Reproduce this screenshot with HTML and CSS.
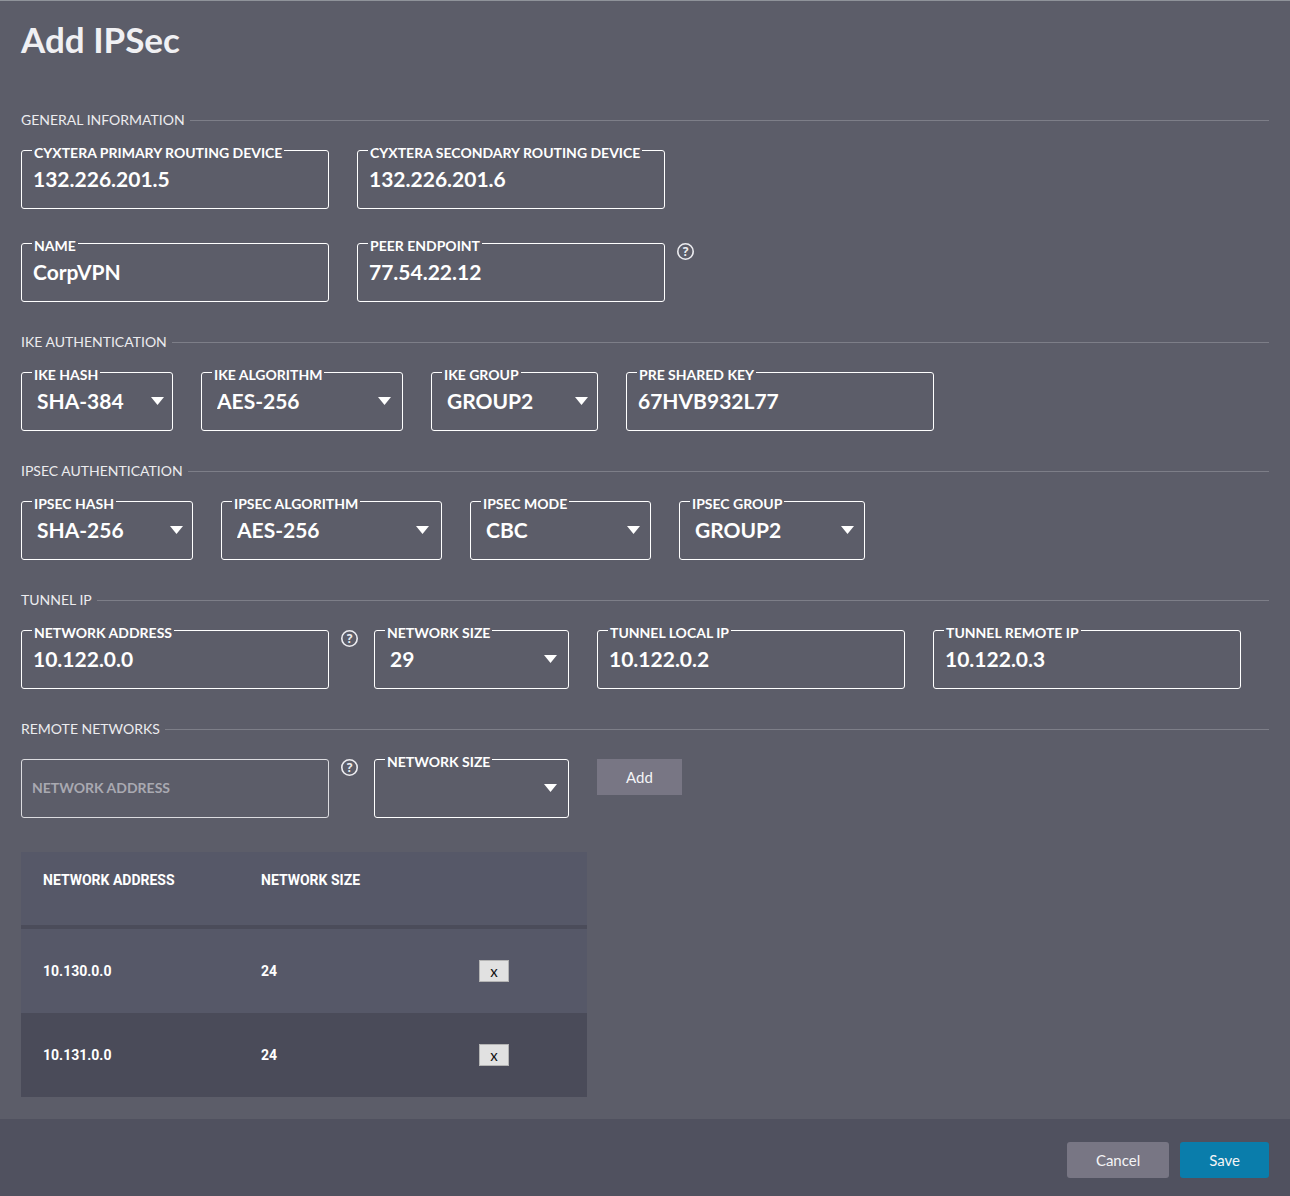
FILE: index.html
```html
<!DOCTYPE html>
<html lang="en">
<head>
<meta charset="utf-8">
<meta name="viewport" content="width=device-width, initial-scale=1">
<title>Add IPSec</title>
<link rel="stylesheet" href="styles.css">
</head>
<body>
<form class="page">
  <main class="content">
    <h1 class="page-title">Add IPSec</h1>

    <section class="section">
      <h2 class="section-title">GENERAL INFORMATION</h2>
      <div class="row">
        <div class="field field-text">
          <input class="control" id="primary" type="text" value="132.226.201.5">
          <label class="label" for="primary">CYXTERA PRIMARY ROUTING DEVICE</label>
        </div>
        <div class="field field-text">
          <input class="control" id="secondary" type="text" value="132.226.201.6">
          <label class="label" for="secondary">CYXTERA SECONDARY ROUTING DEVICE</label>
        </div>
      </div>
      <div class="row">
        <div class="field field-text">
          <input class="control" id="name" type="text" value="CorpVPN">
          <label class="label" for="name">NAME</label>
        </div>
        <div class="with-help">
          <div class="field field-text">
            <input class="control" id="peer" type="text" value="77.54.22.12">
            <label class="label" for="peer">PEER ENDPOINT</label>
          </div>
          <button class="help" type="button"><svg class="help-icon" viewBox="0 0 17 17"><circle cx="8.5" cy="8.5" r="7.7"/><text x="8.5" y="13">?</text></svg></button>
        </div>
      </div>
    </section>

    <section class="section">
      <h2 class="section-title">IKE AUTHENTICATION</h2>
      <div class="row">
        <div class="field field-ike-hash">
          <select class="control select" id="ike-hash"><option>SHA-384</option></select>
          <svg class="arrow" viewBox="0 0 13 8"><path d="M0 0h13L6.5 8z"/></svg>
          <label class="label" for="ike-hash">IKE HASH</label>
        </div>
        <div class="field field-ike-algorithm">
          <select class="control select" id="ike-algorithm"><option>AES-256</option></select>
          <svg class="arrow" viewBox="0 0 13 8"><path d="M0 0h13L6.5 8z"/></svg>
          <label class="label" for="ike-algorithm">IKE ALGORITHM</label>
        </div>
        <div class="field field-ike-group">
          <select class="control select" id="ike-group"><option>GROUP2</option></select>
          <svg class="arrow" viewBox="0 0 13 8"><path d="M0 0h13L6.5 8z"/></svg>
          <label class="label" for="ike-group">IKE GROUP</label>
        </div>
        <div class="field field-text">
          <input class="control" id="psk" type="text" value="67HVB932L77">
          <label class="label" for="psk">PRE SHARED KEY</label>
        </div>
      </div>
    </section>

    <section class="section">
      <h2 class="section-title">IPSEC AUTHENTICATION</h2>
      <div class="row">
        <div class="field field-ipsec-hash">
          <select class="control select" id="ipsec-hash"><option>SHA-256</option></select>
          <svg class="arrow" viewBox="0 0 13 8"><path d="M0 0h13L6.5 8z"/></svg>
          <label class="label" for="ipsec-hash">IPSEC HASH</label>
        </div>
        <div class="field field-ipsec-algorithm">
          <select class="control select" id="ipsec-algorithm"><option>AES-256</option></select>
          <svg class="arrow" viewBox="0 0 13 8"><path d="M0 0h13L6.5 8z"/></svg>
          <label class="label" for="ipsec-algorithm">IPSEC ALGORITHM</label>
        </div>
        <div class="field field-ipsec-mode">
          <select class="control select" id="ipsec-mode"><option>CBC</option></select>
          <svg class="arrow" viewBox="0 0 13 8"><path d="M0 0h13L6.5 8z"/></svg>
          <label class="label" for="ipsec-mode">IPSEC MODE</label>
        </div>
        <div class="field field-ipsec-group">
          <select class="control select" id="ipsec-group"><option>GROUP2</option></select>
          <svg class="arrow" viewBox="0 0 13 8"><path d="M0 0h13L6.5 8z"/></svg>
          <label class="label" for="ipsec-group">IPSEC GROUP</label>
        </div>
      </div>
    </section>

    <section class="section">
      <h2 class="section-title">TUNNEL IP</h2>
      <div class="row">
        <div class="address-pair">
          <div class="with-help">
            <div class="field field-text">
              <input class="control" id="tunnel-address" type="text" value="10.122.0.0">
              <label class="label" for="tunnel-address">NETWORK ADDRESS</label>
            </div>
            <button class="help" type="button"><svg class="help-icon" viewBox="0 0 17 17"><circle cx="8.5" cy="8.5" r="7.7"/><text x="8.5" y="13">?</text></svg></button>
          </div>
          <div class="field field-size">
            <select class="control select" id="tunnel-size"><option>29</option></select>
            <svg class="arrow" viewBox="0 0 13 8"><path d="M0 0h13L6.5 8z"/></svg>
            <label class="label" for="tunnel-size">NETWORK SIZE</label>
          </div>
        </div>
        <div class="field field-text">
          <input class="control" id="local-ip" type="text" value="10.122.0.2">
          <label class="label" for="local-ip">TUNNEL LOCAL IP</label>
        </div>
        <div class="field field-text">
          <input class="control" id="remote-ip" type="text" value="10.122.0.3">
          <label class="label" for="remote-ip">TUNNEL REMOTE IP</label>
        </div>
      </div>
    </section>

    <section class="section">
      <h2 class="section-title">REMOTE NETWORKS</h2>
      <div class="row">
        <div class="address-pair">
          <div class="with-help">
            <div class="field field-text">
              <input class="control control-empty" type="text" aria-label="Network address" placeholder="NETWORK ADDRESS">
            </div>
            <button class="help" type="button"><svg class="help-icon" viewBox="0 0 17 17"><circle cx="8.5" cy="8.5" r="7.7"/><text x="8.5" y="13">?</text></svg></button>
          </div>
          <div class="field field-size">
            <select class="control select" id="remote-size"><option></option></select>
            <svg class="arrow" viewBox="0 0 13 8"><path d="M0 0h13L6.5 8z"/></svg>
            <label class="label" for="remote-size">NETWORK SIZE</label>
          </div>
        </div>
        <button class="button button-add" type="button">Add</button>
      </div>

      <table class="networks">
        <thead>
          <tr><th>NETWORK ADDRESS</th><th>NETWORK SIZE</th><th></th></tr>
        </thead>
        <tbody>
          <tr><td>10.130.0.0</td><td>24</td><td><button class="remove" type="button">x</button></td></tr>
          <tr><td>10.131.0.0</td><td>24</td><td><button class="remove" type="button">x</button></td></tr>
        </tbody>
      </table>
    </section>
  </main>

  <footer class="footer">
    <button class="button" type="button">Cancel</button>
    <button class="button button-save" type="submit">Save</button>
  </footer>
</form>
</body>
</html>
```

FILE: styles.css
```css
:root {
  --bg: #5c5d69;
  --line: #7d7e88;
}

* {
  box-sizing: border-box;
}

body {
  margin: 0;
  background: var(--bg);
  color: #fff;
  font-family: Lato, "Liberation Sans", sans-serif;
}

.page {
  display: flex;
  flex-direction: column;
  min-height: 100vh;
  border-top: 1px solid #8f939a;
}

.content {
  flex: 1;
  padding: 18px 21px 22px;
}

.page-title {
  margin: 0 0 51px;
  font-size: 35px;
  line-height: 40px;
  color: #f0f0f3;
}

.section {
  margin-bottom: 30px;
}

.section:last-child {
  margin-bottom: 0;
}

.section-title {
  display: flex;
  align-items: center;
  gap: 5px;
  margin: 0 0 20px;
  font-size: 14px;
  font-weight: 400;
  line-height: 20px;
  color: #ececef;
}

.section-title::after {
  content: "";
  flex: 1;
  height: 1px;
  background: var(--line);
}

.row {
  display: flex;
  align-items: flex-start;
  gap: 28px;
}

.row + .row,
.row + .networks {
  margin-top: 34px;
}

.with-help {
  display: flex;
  flex: 0 1 337px;
  align-items: flex-start;
  gap: 12px;
  min-width: 0;
}

.address-pair {
  display: flex;
  flex: 0 1 548px;
  gap: 16px;
  min-width: 0;
}

/* The control, its notched label and its arrow share one grid cell. */
.field {
  display: grid;
  min-width: 0;
}

.field > * {
  grid-area: 1 / 1;
}

.field-text { flex: 0 1 308px; }
.field-size { flex: 0 1 195px; }
.field-ike-hash { flex: 0 1 152px; }
.field-ike-algorithm { flex: 0 1 202px; }
.field-ike-group { flex: 0 1 167px; }
.field-ipsec-hash { flex: 0 1 172px; }
.field-ipsec-algorithm { flex: 0 1 221px; }
.field-ipsec-mode { flex: 0 1 181px; }
.field-ipsec-group { flex: 0 1 186px; }

.control {
  width: 100%;
  min-width: 0;
  height: 59px;
  padding: 0 11px 2px;
  border: 1px solid #fff;
  border-radius: 3px;
  background: transparent;
  color: #fff;
  font: 700 21px Lato, "Liberation Sans", sans-serif;
}

.control-empty {
  padding: 0 10px 3px;
  border-color: #dcdce0;
  font-size: 14px;
}

.control::placeholder {
  color: #a9a9b1;
  opacity: 1;
}

.select {
  appearance: none;
  padding: 0 15px 2px;
}

.label {
  justify-self: start;
  margin: -7px 0 0 11px;
  padding: 0 2px;
  background: var(--bg);
  font-size: 14px;
  font-weight: 700;
  line-height: 20px;
  height: 20px;
  white-space: nowrap;
}

.arrow {
  align-self: center;
  justify-self: end;
  width: 13px;
  height: 8px;
  margin-right: 6%;
  margin-bottom: 2px;
  fill: #fff;
  pointer-events: none;
}

.help {
  flex: none;
  width: 17px;
  height: 17px;
  padding: 0;
  border: 0;
  background: none;
}

.help-icon {
  display: block;
  width: 17px;
  height: 17px;
}

.help-icon circle {
  fill: none;
  stroke: #ececf0;
  stroke-width: 1.6;
}

.help-icon text {
  fill: #ececf0;
  font: 700 12px "Open Sans", "Liberation Sans", sans-serif;
  text-anchor: middle;
}

.button {
  height: 36px;
  padding: 0 29px 1px;
  border: 0;
  border-radius: 3px;
  background: #787684;
  color: #f4f4f6;
  font: 400 15px Lato, "Liberation Sans", sans-serif;
}

.button-add {
  border-radius: 0;
}

.button-save {
  background: #0a7dab;
}

.networks {
  width: 566px;
  max-width: 100%;
  border-collapse: separate;
  border-spacing: 0;
  table-layout: fixed;
  font: 700 14px/20px Roboto, "Liberation Sans", sans-serif;
  text-align: left;
}

.networks th {
  width: 218px;
  height: 77px;
  padding: 18px 22px;
  border-bottom: 4px solid #4b4c5a;
  background: #565868;
  vertical-align: top;
}

.networks th:last-child {
  width: auto;
}

.networks td {
  height: 84px;
  padding: 0 22px;
  background: #565868;
}

.networks tr:nth-child(2) td {
  background: #4a4b59;
}

.remove {
  display: block;
  width: 30px;
  height: 22px;
  padding: 0;
  border: 1px solid #b4b4b4;
  background: #e1e1e1;
  color: #111;
  font: 400 15px Lato, "Liberation Sans", sans-serif;
}

.footer {
  display: flex;
  justify-content: flex-end;
  gap: 11px;
  padding: 23px 21px 18px;
  background: #50515f;
}
```
